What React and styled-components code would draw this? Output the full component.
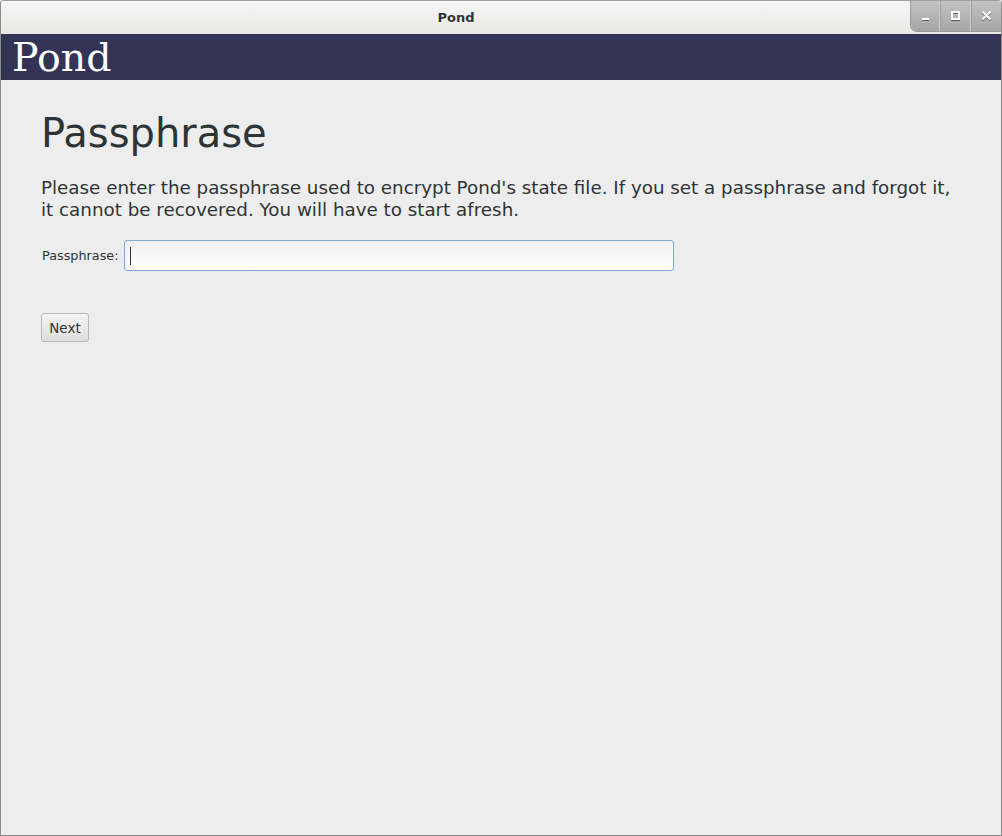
import React from "react";
import styled, { createGlobalStyle } from "styled-components";

const GlobalStyle = createGlobalStyle`
  html, body {
    margin: 0;
    padding: 0;
    background: #ededed;
  }
  body {
    font-family: "DejaVu Sans", "Liberation Sans", sans-serif;
    color: #2e3436;
  }
`;

const Window = styled.div`
  width: 1002px;
  height: 836px;
  box-sizing: border-box;
  border: 1px solid #8a8a8a;
  border-top-color: #a0a0a0;
  border-radius: 4px 4px 0 0;
  display: flex;
  flex-direction: column;
  background: #ededed;
  overflow: hidden;
`;

const TitleBar = styled.div`
  height: 33px;
  flex: none;
  position: relative;
  display: flex;
  align-items: center;
  justify-content: center;
  padding-right: 90px;
  background: linear-gradient(#f6f6f6, #e8e8e6);
  font-size: 13px;
  font-weight: bold;
  color: #2e3436;
  text-shadow: 0 1px 0 #fff;
`;

const Controls = styled.div`
  position: absolute;
  top: -1px;
  right: 0;
  height: 31px;
  display: flex;
  border-radius: 0 0 0 6px;
  overflow: hidden;
  background: linear-gradient(#c4c4c4, #a6a6a6);
  box-shadow: 0 0 0 1px #9a9a9a;
`;

const ControlButton = styled.div`
  width: ${p => (p.first ? "28px" : "30px")};
  height: 31px;
  display: flex;
  align-items: center;
  justify-content: center;
  border-left: ${p => (p.first ? "none" : "1px solid #d0d0d0")};
  box-shadow: ${p => (p.first ? "none" : "inset 1px 0 0 #9c9c9c")};
  svg {
    filter: drop-shadow(0 1px 0 rgba(60, 60, 60, 0.7));
  }
`;

const Header = styled.div`
  height: 46px;
  flex: none;
  background: #333355;
  color: #ffffff;
  font-family: "DejaVu Serif", "Liberation Serif", serif;
  font-size: 39.5px;
  line-height: 46px;
  padding-left: 11px;
`;

const Content = styled.div`
  padding: 28px 40px;
  display: flex;
  flex-direction: column;
  align-items: flex-start;
`;

const Title = styled.h1`
  margin: 0;
  font-weight: normal;
  font-size: 40px;
  line-height: 50px;
  color: #2e3436;
`;

const Description = styled.p`
  margin: 19px 0 0;
  font-size: 18.3px;
  line-height: 22px;
  color: #2e3436;
`;

const FieldRow = styled.div`
  margin-top: 19px;
  display: flex;
  align-items: center;
  gap: 5px;
`;

const Label = styled.label`
  font-size: 12.8px;
  padding-left: 1px;
`;

const Input = styled.div`
  box-sizing: border-box;
  width: 550px;
  height: 31px;
  border: 1px solid #7fa7d8;
  border-radius: 3px;
  background: linear-gradient(#f0f0f0, #ffffff);
  display: flex;
  align-items: center;
  padding-left: 5px;
`;

const Caret = styled.div`
  width: 1px;
  height: 18px;
  background: #2e3436;
`;

const Button = styled.div`
  margin-top: 42px;
  width: 46px;
  height: 27px;
  border: 1px solid #b9b9b9;
  border-radius: 3px;
  background: linear-gradient(#f4f4f4, #dedede);
  display: flex;
  align-items: center;
  justify-content: center;
  font-size: 13.5px;
  color: #2e3436;
`;

const Minimize = () => (
  <svg width="11" height="11" viewBox="0 0 11 11">
    <rect x="2" y="8" width="7" height="2" fill="#fff" />
  </svg>
);

const Maximize = () => (
  <svg width="11" height="11" viewBox="0 0 11 11">
    <rect x="2" y="2" width="7" height="7" fill="none" stroke="#fff" strokeWidth="2" />
  </svg>
);

const Close = () => (
  <svg width="11" height="11" viewBox="0 0 11 11">
    <path d="M1.5 1.5 L9.5 9.5 M9.5 1.5 L1.5 9.5" stroke="#fff" strokeWidth="2.2" />
  </svg>
);

const App = () => {
  return (
    <Window>
      <GlobalStyle />
      <TitleBar>
        Pond
        <Controls>
          <ControlButton first>
            <Minimize />
          </ControlButton>
          <ControlButton>
            <Maximize />
          </ControlButton>
          <ControlButton>
            <Close />
          </ControlButton>
        </Controls>
      </TitleBar>
      <Header>Pond</Header>
      <Content>
        <Title>Passphrase</Title>
        <Description>
          Please enter the passphrase used to encrypt Pond's state file. If you set a passphrase and forgot it,
          <br />
          it cannot be recovered. You will have to start afresh.
        </Description>
        <FieldRow>
          <Label>Passphrase:</Label>
          <Input>
            <Caret />
          </Input>
        </FieldRow>
        <Button>Next</Button>
      </Content>
    </Window>
  );
};

export default App;
